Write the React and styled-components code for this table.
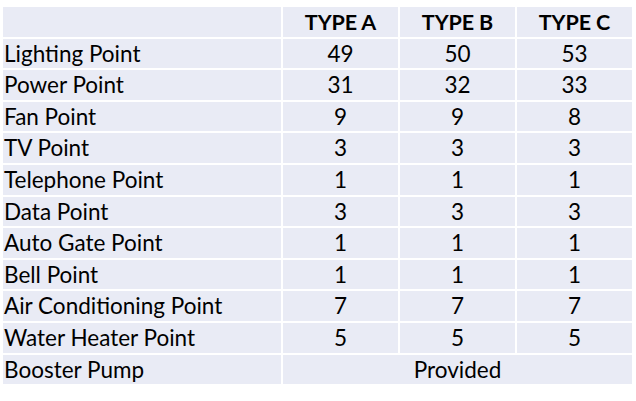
import React from "react"
import styled, { createGlobalStyle } from "styled-components"

const GlobalStyle = createGlobalStyle`
  html, body {
    margin: 0;
    padding: 0;
    background: #ffffff;
  }
  body {
    font-family: Lato, "Open Sans", "Liberation Sans", sans-serif;
    color: #000000;
  }
`

const Page = styled.div`
  padding: 7px 0 0 3px;
`

const Table = styled.div`
  display: grid;
  grid-template-columns: 278px 115px 115px 115px;
  grid-auto-rows: 29.6px;
  gap: 2px;
  width: 629px;
`

const Cell = styled.div`
  background: #e9ebf5;
  display: flex;
  align-items: center;
  justify-content: ${({ $label }) => ($label ? "flex-start" : "center")};
  padding-left: ${({ $label }) => ($label ? "1px" : "0")};
  grid-column: ${({ $span }) => ($span ? `span ${$span}` : "auto")};
  font-size: ${({ $head }) => ($head ? "21.5px" : "22.5px")};
  font-weight: ${({ $head }) => ($head ? 700 : 400)};
  letter-spacing: ${({ $head }) => ($head ? "-0.1px" : "0")};
  white-space: nowrap;
  line-height: 1;
  padding-top: 1px;
`

const rows = [
  ["Lighting Point", 49, 50, 53],
  ["Power Point", 31, 32, 33],
  ["Fan Point", 9, 9, 8],
  ["TV Point", 3, 3, 3],
  ["Telephone Point", 1, 1, 1],
  ["Data Point", 3, 3, 3],
  ["Auto Gate Point", 1, 1, 1],
  ["Bell Point", 1, 1, 1],
  ["Air Conditioning Point", 7, 7, 7],
  ["Water Heater Point", 5, 5, 5],
]

export default function App() {
  return (
    <Page>
      <GlobalStyle />
      <Table>
        <Cell $label />
        <Cell $head>TYPE A</Cell>
        <Cell $head>TYPE B</Cell>
        <Cell $head>TYPE C</Cell>
        {rows.map(([label, a, b, c]) => (
          <React.Fragment key={label}>
            <Cell $label>{label}</Cell>
            <Cell>{a}</Cell>
            <Cell>{b}</Cell>
            <Cell>{c}</Cell>
          </React.Fragment>
        ))}
        <Cell $label>Booster Pump</Cell>
        <Cell $span={3}>Provided</Cell>
      </Table>
    </Page>
  )
}
